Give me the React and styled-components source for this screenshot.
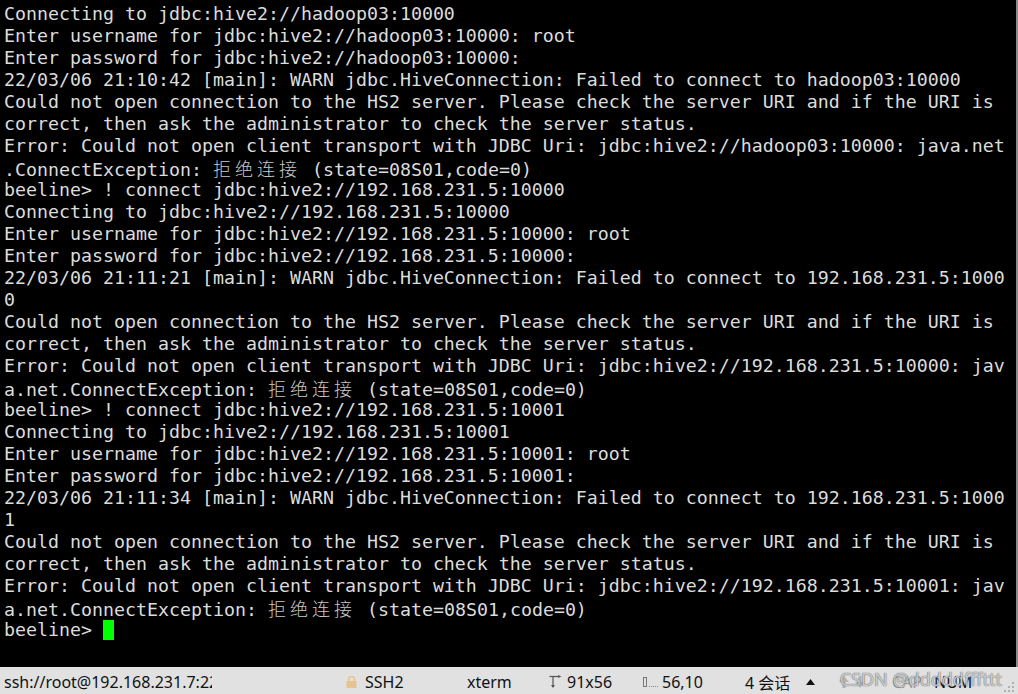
import React from "react"
import styled, { createGlobalStyle } from "styled-components"

const GlobalStyle = createGlobalStyle`
  html, body {
    margin: 0;
    padding: 0;
    background: #000;
    overflow: hidden;
  }
`

const Window = styled.div`
  width: 1018px;
  height: 694px;
  display: flex;
  flex-direction: column;
  background: #000;
`

const Screen = styled.div`
  flex: 1;
  display: flex;
  min-height: 0;
`

const Output = styled.div`
  flex: 1;
  padding: 3px 0 0 4px;
  overflow: hidden;
  font-family: "DejaVu Sans Mono", "Liberation Mono", monospace;
  font-size: 18.27px;
  line-height: 22px;
  color: #dcdcdc;
  white-space: pre;
`

const Line = styled.div`
  height: 22px;
`

// CJK chars take two terminal columns (22px)
const Wide = styled.span`
  font-family: "Noto Sans CJK SC", sans-serif;
  font-size: 18px;
  font-weight: 300;
  letter-spacing: 4px;
  color: #c8c8c8;
`

const Cursor = styled.span`
  display: inline-block;
  width: 11px;
  height: 20px;
  margin-top: 1px;
  background: #00ff00;
  vertical-align: top;
`

const EdgeBar = styled.div`
  width: 2px;
  background: #8a8a8a;
`

const StatusBar = styled.div`
  position: relative;
  height: 27px;
  padding-top: 3px;
  box-sizing: border-box;
  display: flex;
  align-items: center;
  background: #e1e1e1;
  font-family: "Noto Sans", "Noto Sans CJK SC", sans-serif;
  font-size: 16px;
  color: #111;
`

const Cell = styled.div`
  width: ${p => p.$w}px;
  flex: none;
  display: flex;
  align-items: center;
  gap: ${p => p.$gap || 0}px;
  padding-left: ${p => p.$pl || 0}px;
  box-sizing: border-box;
  overflow: hidden;
  white-space: nowrap;
  color: ${p => (p.$dim ? "#9a9a9a" : "inherit")};
`

const Watermark = styled.div`
  position: absolute;
  right: 16px;
  top: 0;
  font-family: "Noto Sans", sans-serif;
  font-size: 18px;
  line-height: 24px;
  color: rgba(255, 255, 255, 0.7);
  text-shadow: 0 0 1px rgba(70, 70, 70, 0.9), 0 0 1px rgba(70, 70, 70, 0.6);
  pointer-events: none;
`

const Grip = styled.svg`
  position: absolute;
  right: 3px;
  bottom: 1px;
`

const lines = [
  "Connecting to jdbc:hive2://hadoop03:10000",
  "Enter username for jdbc:hive2://hadoop03:10000: root",
  "Enter password for jdbc:hive2://hadoop03:10000:",
  "22/03/06 21:10:42 [main]: WARN jdbc.HiveConnection: Failed to connect to hadoop03:10000",
  "Could not open connection to the HS2 server. Please check the server URI and if the URI is",
  "correct, then ask the administrator to check the server status.",
  "Error: Could not open client transport with JDBC Uri: jdbc:hive2://hadoop03:10000: java.net",
  ".ConnectException: 拒绝连接 (state=08S01,code=0)",
  "beeline> ! connect jdbc:hive2://192.168.231.5:10000",
  "Connecting to jdbc:hive2://192.168.231.5:10000",
  "Enter username for jdbc:hive2://192.168.231.5:10000: root",
  "Enter password for jdbc:hive2://192.168.231.5:10000:",
  "22/03/06 21:11:21 [main]: WARN jdbc.HiveConnection: Failed to connect to 192.168.231.5:1000",
  "0",
  "Could not open connection to the HS2 server. Please check the server URI and if the URI is",
  "correct, then ask the administrator to check the server status.",
  "Error: Could not open client transport with JDBC Uri: jdbc:hive2://192.168.231.5:10000: jav",
  "a.net.ConnectException: 拒绝连接 (state=08S01,code=0)",
  "beeline> ! connect jdbc:hive2://192.168.231.5:10001",
  "Connecting to jdbc:hive2://192.168.231.5:10001",
  "Enter username for jdbc:hive2://192.168.231.5:10001: root",
  "Enter password for jdbc:hive2://192.168.231.5:10001:",
  "22/03/06 21:11:34 [main]: WARN jdbc.HiveConnection: Failed to connect to 192.168.231.5:1000",
  "1",
  "Could not open connection to the HS2 server. Please check the server URI and if the URI is",
  "correct, then ask the administrator to check the server status.",
  "Error: Could not open client transport with JDBC Uri: jdbc:hive2://192.168.231.5:10001: jav",
  "a.net.ConnectException: 拒绝连接 (state=08S01,code=0)",
]

const renderLine = text =>
  text.split(/([\u4e00-\u9fff]+)/).map((part, i) =>
    /[\u4e00-\u9fff]/.test(part) ? <Wide key={i}>{part}</Wide> : part
  )

const LockIcon = () => (
  <svg width="11" height="12" viewBox="0 0 11 12">
    <path d="M2.5 5 V3.5 a3 3 0 0 1 6 0 V5" fill="none" stroke="#e6c490" strokeWidth="1.6" />
    <rect x="0.5" y="5" width="10" height="7" rx="1" fill="#e6c490" />
  </svg>
)

const SizeIcon = () => (
  <svg width="13" height="14" viewBox="0 0 13 14">
    <g stroke="#555" strokeWidth="1.2" fill="#555">
      <line x1="4" y1="2" x2="4" y2="12" />
      <line x1="0.5" y1="1.5" x2="9" y2="1.5" />
      <path d="M2 10 L4 13 L6 10 Z" stroke="none" />
      <path d="M9 0 L12.5 1.5 L9 3 Z" stroke="none" />
    </g>
  </svg>
)

const PosIcon = () => (
  <svg width="16" height="14" viewBox="0 0 16 14">
    <rect x="0.5" y="2.5" width="3" height="9" fill="none" stroke="#777" />
    <g fill="#888">
      <rect x="6" y="11" width="1" height="1" />
      <rect x="8" y="11" width="1" height="1" />
      <rect x="10" y="11" width="1" height="1" />
      <rect x="12" y="11" width="1" height="1" />
      <rect x="14" y="11" width="1" height="1" />
    </g>
  </svg>
)

const UpArrow = () => (
  <svg width="9" height="6" viewBox="0 0 9 6">
    <path d="M0 6 L4.5 0 L9 6 Z" fill="#111" />
  </svg>
)

const ScrollArrows = () => (
  <svg width="28" height="16" viewBox="0 0 28 16">
    <path d="M1 8 L6 2 L11 8 Z M4.5 8 h3 v6 h-3 Z" fill="#b4b4b4" />
    <path d="M17 8 L22 14 L27 8 Z M20.5 2 h3 v6 h-3 Z" fill="#b4b4b4" />
  </svg>
)

export default function App() {
  return (
    <Window>
      <GlobalStyle />
      <Screen>
        <Output>
          {lines.map((l, i) => (
            <Line key={i}>{renderLine(l)}</Line>
          ))}
          <Line>
            {"beeline> "}
            <Cursor />
          </Line>
        </Output>
        <EdgeBar />
      </Screen>
      <StatusBar>
        <Cell $w={212} $pl={4}>ssh://root@192.168.231.7:22</Cell>
        <Cell $w={250} $pl={134} $gap={8}>
          <LockIcon />
          SSH2
        </Cell>
        <Cell $w={82} $pl={5}>xterm</Cell>
        <Cell $w={94} $pl={5} $gap={5}>
          <SizeIcon />
          91x56
        </Cell>
        <Cell $w={104} $pl={5} $gap={3}>
          <PosIcon />
          56,10
        </Cell>
        <Cell $w={56} $pl={3}>4 会话</Cell>
        <Cell $w={38} $pl={8}>
          <UpArrow />
        </Cell>
        <Cell $w={52} $pl={2}>
          <ScrollArrows />
        </Cell>
        <Cell $w={46} $pl={4} $dim>CAP</Cell>
        <Cell $w={50} $pl={0}>NUM</Cell>
        <Watermark>CSDN @dddddfffttt</Watermark>
        <Grip width="12" height="12" viewBox="0 0 12 12">
          <g fill="#b0b0b0">
            <rect x="9" y="1" width="2" height="2" />
            <rect x="5" y="5" width="2" height="2" />
            <rect x="9" y="5" width="2" height="2" />
            <rect x="1" y="9" width="2" height="2" />
            <rect x="5" y="9" width="2" height="2" />
            <rect x="9" y="9" width="2" height="2" />
          </g>
        </Grip>
      </StatusBar>
    </Window>
  )
}
